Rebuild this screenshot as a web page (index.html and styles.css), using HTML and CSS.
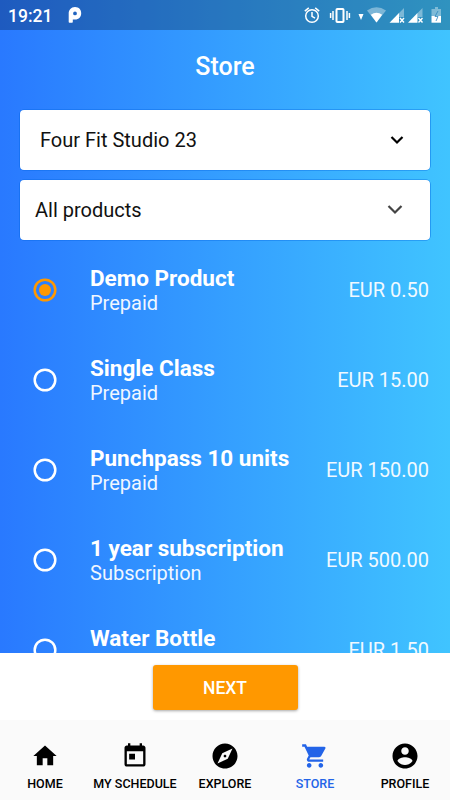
FILE: index.html
```html
<!DOCTYPE html>
<html lang="en">
<head>
<meta charset="utf-8">
<title>Store</title>
<link rel="stylesheet" href="styles.css">
</head>
<body>
<div class="app">
  <header class="status">
    <span class="clock">19:21</span>
    <svg class="parking" width="14" height="18" viewBox="0 0 14 18"><path fill="#fff" fill-rule="evenodd" d="M7 1C3 1 .7 4 .7 7.500V16q0 .8.8.8H4q.8 0 .8-.8v-2.500H7C11 13.500 13.200 10.500 13.200 7.200S11 1 7 1ZM7 5.500a1.900 1.900 0 1 1 0 3.800A1.900 1.900 0 0 1 7 5.500Z"/></svg>
    <svg class="indicators" width="146" height="30" viewBox="0 0 146 30">
      <g fill="none" stroke="#fff" stroke-width="1.500">
        <circle cx="8" cy="16" r="6.300"/><path d="M8 12v4.400l3 1.800M.8 11.200l4-3.300M11.200 7.900l4 3.300"/>
        <rect x="32.500" y="9" width="7" height="13" rx=".8" stroke-width="2"/><path d="M29 11v9M43 11v9M26.600 13v5M45.400 13v5"/>
      </g>
      <path fill="#fff" d="M54.500 14h5l-2.500 6z"/>
      <path fill="#fff" fill-opacity=".38" d="M63 10.500Q72.500 4 82 10.500L72.500 22.500Z"/>
      <path fill="#fff" d="M66.800 14.800q5.700-4 11.400 0l-5.700 7.700z"/>
      <g id="signal"><path fill="#fff" fill-opacity=".38" d="M100 8v9h-5v-4l-9.500 9.700z"/><path fill="#fff" d="M85.500 22.700 95 13v9.700z"/><path stroke="#fff" stroke-width="1.400" d="m96 18 4 4.500m0-4.500-4 4.500"/></g>
      <use href="#signal" x="18.500"/>
      <path fill="#fff" fill-opacity=".38" d="M131 7h3v2h3v7h-9.500V9h3.500z"/><path fill="#fff" d="M127.500 16h9.500v6.700h-9.500z"/><path d="m134 11-3 5.500h3l-2 4.500" fill="none" stroke="#2d86bf" stroke-width=".8"/>
    </svg>
  </header>
  <main class="store">
    <h1>Store</h1>
    <div class="select"><span class="studio">Four Fit Studio 23</span><svg class="arrow" width="14" height="10" viewBox="0 0 14 10"><path d="m1.500 2 5.500 5.500L12.500 2"/></svg></div>
    <div class="select filter"><span class="kind">All products</span><svg class="arrow" width="16" height="12" viewBox="0 0 16 12"><path d="m1.500 2 6.500 6.500L14.500 2"/></svg></div>
    <ul class="products">
      <li><svg class="radio checked" viewBox="0 0 24 24"><circle cx="12" cy="12" r="10.300"/><circle class="dot" cx="12" cy="12" r="6"/></svg><div class="info"><b>Demo Product</b><span>Prepaid</span></div><span class="price">EUR 0.50</span></li>
      <li><svg class="radio" viewBox="0 0 24 24"><circle cx="12" cy="12" r="10.300"/></svg><div class="info"><b>Single Class</b><span>Prepaid</span></div><span class="price">EUR 15.00</span></li>
      <li><svg class="radio" viewBox="0 0 24 24"><circle cx="12" cy="12" r="10.300"/></svg><div class="info"><b>Punchpass 10 units</b><span>Prepaid</span></div><span class="price">EUR 150.00</span></li>
      <li><svg class="radio" viewBox="0 0 24 24"><circle cx="12" cy="12" r="10.300"/></svg><div class="info"><b>1 year subscription</b><span>Subscription</span></div><span class="price">EUR 500.00</span></li>
      <li><svg class="radio" viewBox="0 0 24 24"><circle cx="12" cy="12" r="10.300"/></svg><div class="info"><b>Water Bottle</b></div><span class="price">EUR 1.50</span></li>
    </ul>
  </main>
  <div class="action"><button>NEXT</button></div>
  <nav>
    <a><svg viewBox="0 0 24 24"><path d="M10 20v-6h4v6h5v-8h3L12 3 2 12h3v8z"/></svg><span>HOME</span></a>
    <a><svg viewBox="0 0 24 24"><path d="M19 3h-1V1h-2v2H8V1H6v2H5c-1.110 0-1.990.9-1.990 2L3 19c0 1.100.89 2 2 2h14c1.100 0 2-.9 2-2V5c0-1.100-.9-2-2-2zm0 16H5V8h14v11zM7 10h5v5H7z"/></svg><span>MY SCHEDULE</span></a>
    <a><svg class="round" viewBox="0 0 24 24"><path d="M12 10.900c-.61 0-1.100.49-1.100 1.100s.49 1.100 1.100 1.100c.61 0 1.100-.49 1.100-1.100s-.49-1.100-1.100-1.100zM12 2C6.480 2 2 6.480 2 12s4.480 10 10 10 10-4.480 10-10S17.520 2 12 2zm2.190 12.190L6 18l3.810-8.190L18 6l-3.810 8.190z"/></svg><span>EXPLORE</span></a>
    <a class="active"><svg viewBox="0 0 24 24"><path d="M7 18c-1.100 0-1.990.9-1.990 2S5.900 22 7 22s2-.9 2-2-.9-2-2-2zM1 2v2h2l3.600 7.590-1.350 2.450c-.16.28-.25.61-.25.960 0 1.100.9 2 2 2h12v-2H7.420c-.14 0-.25-.11-.25-.25l.03-.12.900-1.630h7.450c.75 0 1.410-.41 1.750-1.030l3.580-6.490A1 1 0 0 0 20 4H5.210l-.94-2H1zm16 16c-1.100 0-1.990.9-1.990 2s.89 2 1.990 2 2-.9 2-2-.9-2-2-2z"/></svg><span>STORE</span></a>
    <a><svg class="round" viewBox="0 0 24 24"><path d="M12 2C6.480 2 2 6.480 2 12s4.480 10 10 10 10-4.480 10-10S17.520 2 12 2zm0 3c1.660 0 3 1.340 3 3s-1.340 3-3 3-3-1.340-3-3 1.340-3 3-3zm0 14.200c-2.500 0-4.710-1.280-6-3.220.03-1.990 4-3.080 6-3.080 1.990 0 5.970 1.090 6 3.080-1.290 1.940-3.500 3.220-6 3.220z"/></svg><span>PROFILE</span></a>
  </nav>
</div>
</body>
</html>
```
FILE: styles.css
```css
* { box-sizing: border-box; }
body { margin: 0; font-family: Roboto, sans-serif; }
.app {
  width: 450px; height: 800px; display: flex; flex-direction: column; overflow: hidden;
  background: linear-gradient(90deg, #2979ff, #40c4ff);
}
.status { height: 30px; flex: none; display: flex; align-items: center; background: rgba(0, 0, 0, .25); color: #fff; padding-left: 8px; }
.clock { font-size: 17.5px; font-weight: 500; width: 60px; line-height: 30px; padding-top: 1px; }
.indicators { margin-left: auto; }
.store { height: 622.5px; flex: none; overflow: hidden; padding: 0 20px; }
h1 { margin: 0; height: 80px; padding-top: 22px; font-size: 25px; line-height: 30px; font-weight: 500; color: #fff; text-align: center; }
.select {
  height: 60px; margin-bottom: 10px; padding: 0 26px 0 20px; display: flex; align-items: center; justify-content: space-between;
  border-radius: 4px; background: #fff; color: #111; font-size: 20px; box-shadow: 0 0 0 .6px rgba(0, 100, 225, .7);
}
.filter { padding: 0 27px 0 15px; }
.arrow path { fill: none; stroke: #000; stroke-width: 2.2; }
.filter .arrow path { stroke: #444; }
.products { list-style: none; margin: 0; padding: 0; }
.products li { height: 90px; display: flex; align-items: flex-start; padding-top: 14px; color: #fff; }
.radio { width: 24px; height: 24px; margin: 14px 33px 0 13px; flex: none; fill: none; stroke: #fff; stroke-width: 2.5; }
.checked { stroke: #ff9800; }
.dot { fill: #ff9800; stroke: none; }
.info { flex: 1; display: flex; flex-direction: column; }
.info b { font-size: 22.5px; line-height: 28px; white-space: nowrap; }
.info span { font-size: 20px; line-height: 24px; margin-top: -1px; opacity: .93; }
.price { font-size: 20px; line-height: 24px; margin: 14px 1px 0 0; opacity: .93; }
.action { height: 67.5px; flex: none; background: #fff; display: flex; justify-content: center; padding-top: 12.5px; }
button { width: 145px; height: 45px; border: 0; border-radius: 3px; background: #ff9800; color: #fff; font: 500 17.5px Roboto, sans-serif; box-shadow: 0 1px 3px rgba(0, 0, 0, .35); }
nav { flex: 1; display: grid; grid-template-columns: repeat(5, 90px); background: #fafafa; }
nav a { display: flex; flex-direction: column; align-items: center; padding-top: 22px; color: #000; font-size: 12.5px; font-weight: 500; white-space: nowrap; }
nav svg { width: 28px; height: 28px; fill: currentColor; }
nav .round { width: 30px; height: 30px; margin: -1px; }
nav span { line-height: 16px; margin-top: 5px; padding-top: 1px; }
nav .active { color: #2364e8; }
```
